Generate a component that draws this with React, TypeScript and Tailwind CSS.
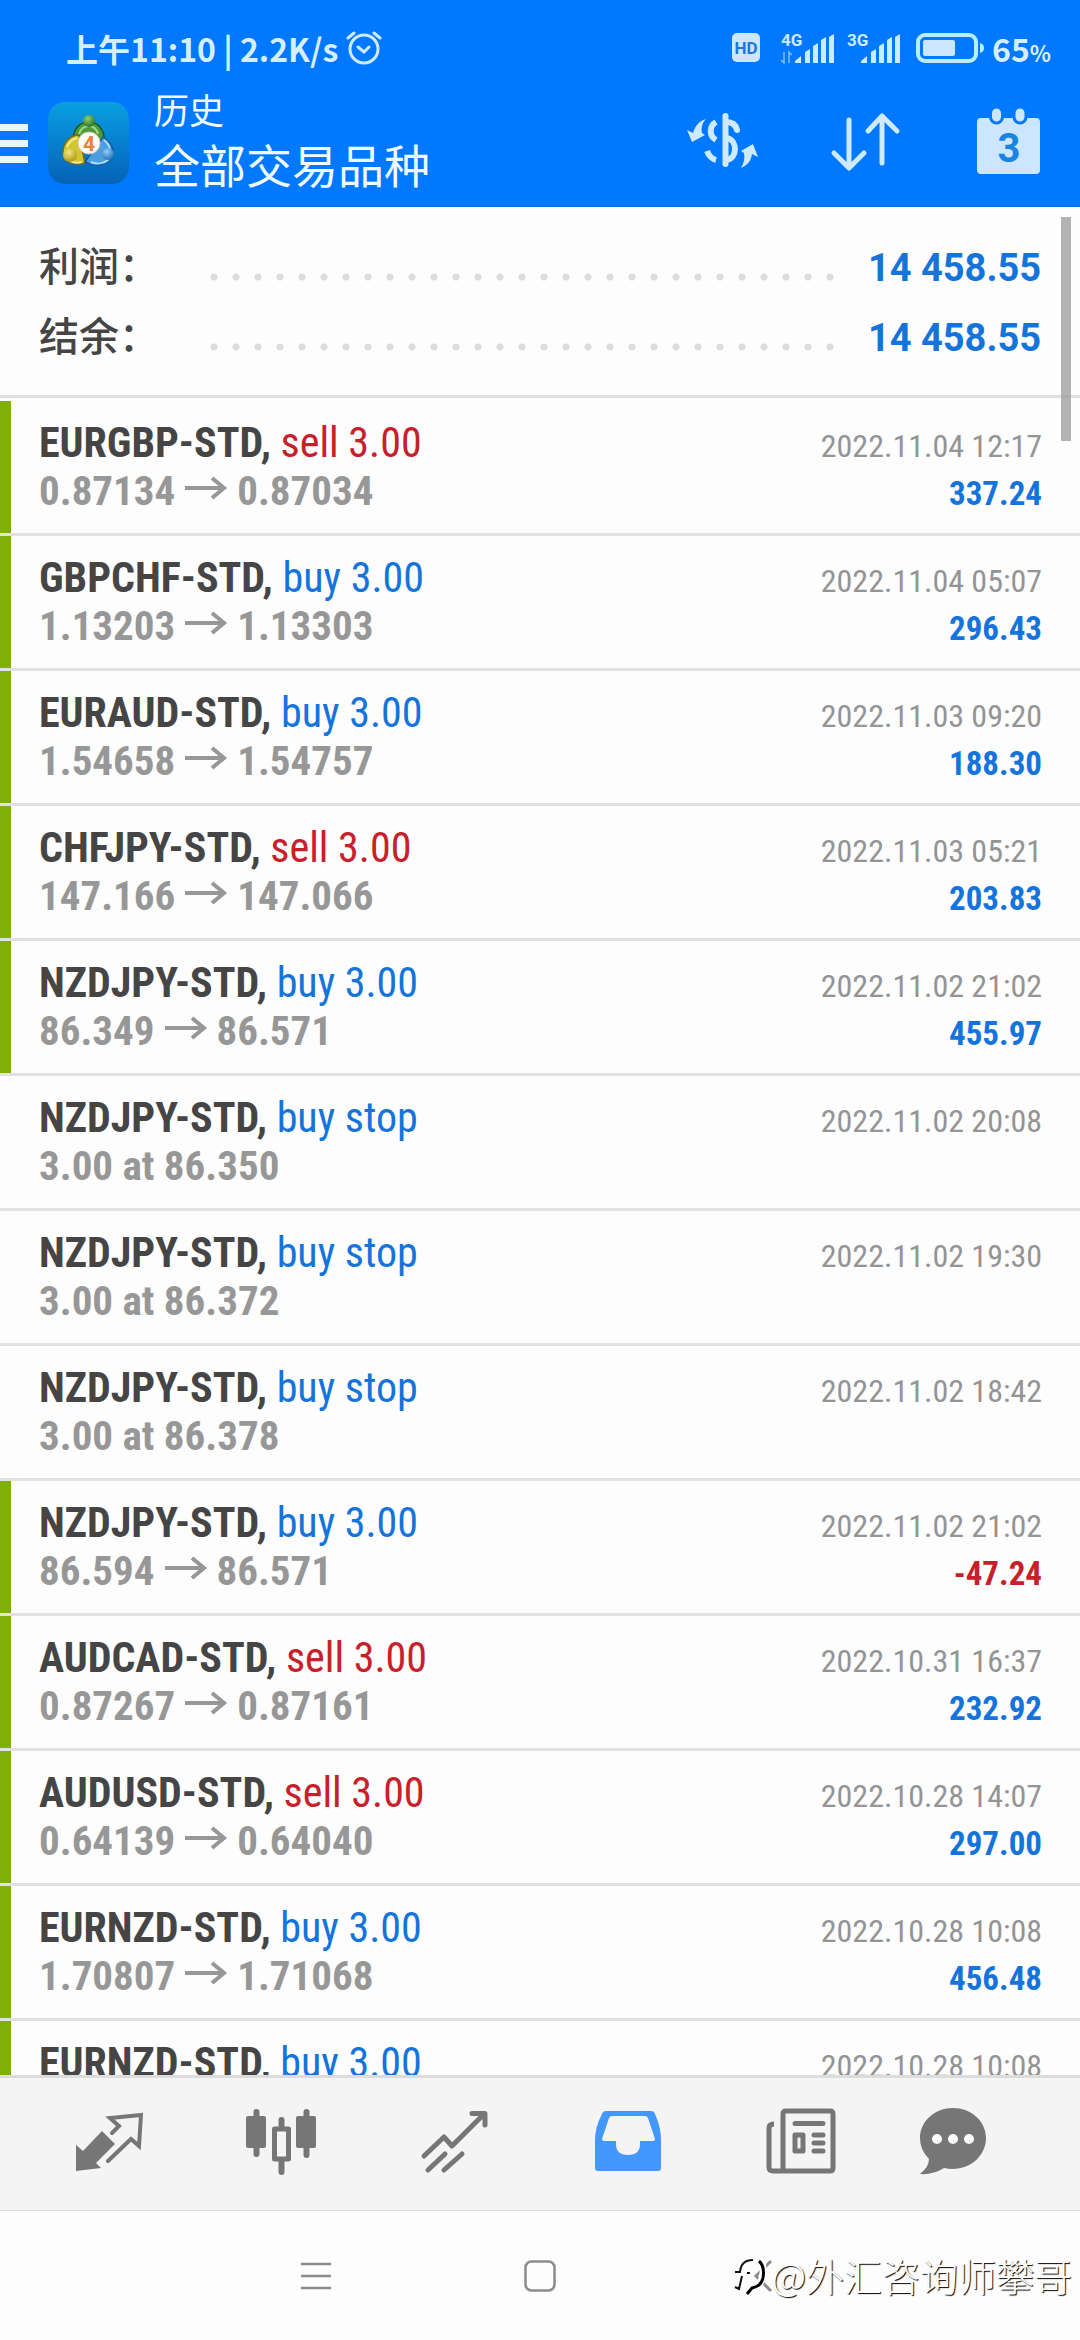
import type { ReactNode } from "react";

type Deal = {
  symbol: string;
  side: "buy" | "sell";
  label: string;
  time: string;
  from?: string;
  to?: string;
  order?: string;
  profit?: string;
};

const deals: Deal[] = [
  { symbol: "EURGBP-STD", side: "sell", label: "sell 3.00", from: "0.87134", to: "0.87034", time: "2022.11.04 12:17", profit: "337.24" },
  { symbol: "GBPCHF-STD", side: "buy", label: "buy 3.00", from: "1.13203", to: "1.13303", time: "2022.11.04 05:07", profit: "296.43" },
  { symbol: "EURAUD-STD", side: "buy", label: "buy 3.00", from: "1.54658", to: "1.54757", time: "2022.11.03 09:20", profit: "188.30" },
  { symbol: "CHFJPY-STD", side: "sell", label: "sell 3.00", from: "147.166", to: "147.066", time: "2022.11.03 05:21", profit: "203.83" },
  { symbol: "NZDJPY-STD", side: "buy", label: "buy 3.00", from: "86.349", to: "86.571", time: "2022.11.02 21:02", profit: "455.97" },
  { symbol: "NZDJPY-STD", side: "buy", label: "buy stop", order: "3.00 at 86.350", time: "2022.11.02 20:08" },
  { symbol: "NZDJPY-STD", side: "buy", label: "buy stop", order: "3.00 at 86.372", time: "2022.11.02 19:30" },
  { symbol: "NZDJPY-STD", side: "buy", label: "buy stop", order: "3.00 at 86.378", time: "2022.11.02 18:42" },
  { symbol: "NZDJPY-STD", side: "buy", label: "buy 3.00", from: "86.594", to: "86.571", time: "2022.11.02 21:02", profit: "-47.24" },
  { symbol: "AUDCAD-STD", side: "sell", label: "sell 3.00", from: "0.87267", to: "0.87161", time: "2022.10.31 16:37", profit: "232.92" },
  { symbol: "AUDUSD-STD", side: "sell", label: "sell 3.00", from: "0.64139", to: "0.64040", time: "2022.10.28 14:07", profit: "297.00" },
  { symbol: "EURNZD-STD", side: "buy", label: "buy 3.00", from: "1.70807", to: "1.71068", time: "2022.10.28 10:08", profit: "456.48" },
  { symbol: "EURNZD-STD", side: "buy", label: "buy 3.00", from: "1.70807", to: "1.71068", time: "2022.10.28 10:08", profit: "456.48" },
];

const totals = [
  { label: "利润：", value: "14 458.55" },
  { label: "结余：", value: "14 458.55" },
];

function Signal({ network, data }: { network: string; data?: boolean }) {
  return (
    <svg width="54" height="38" viewBox="0 -4 54 38" fill="#cdeaff" className="overflow-visible">
      <text x="0" y="13" fontSize="17" fontWeight="700" fontFamily="Roboto, sans-serif">
        {network}
      </text>
      {data && (
        <path d="M3 19v11l-3-3M8 30V19l3 3" fill="none" stroke="#7fbdff" strokeWidth="1.5" />
      )}
      <path d="M14 30v-2l6-5v7zM24 30V19l5-3v14zM32 30V13l5-3v20zM40 30V7l5-3v26zM48 30V4l5-3v29z" />
    </svg>
  );
}

function StatusBar() {
  return (
    <div className="flex h-[87px] items-center justify-between pt-[9px] pr-[29px] pl-[66px] font-['Noto_Sans_CJK_SC',sans-serif] text-[#d5efff]">
      <div className="flex items-center gap-2 text-[32px] font-bold">
        <span>上午11:10 | 2.2K/s</span>
        <svg width="36" height="36" viewBox="0 0 36 36" fill="none" stroke="#cdeaff" strokeWidth="3" strokeLinecap="round">
          <circle cx="18" cy="19" r="14" />
          <path d="M12 17l6 5 5-5M2 8l6-5M34 8l-6-5" />
        </svg>
      </div>
      <div className="flex items-center">
        <svg width="28" height="30" viewBox="0 0 28 30" className="mr-[21px]">
          <rect width="28" height="29" rx="5" fill="#cde6ff" />
          <text x="14" y="21" textAnchor="middle" fontSize="17" fontWeight="700" fill="#1a78de" fontFamily="Roboto, sans-serif">
            HD
          </text>
        </svg>
        <Signal network="4G" data />
        <span className="w-3" />
        <Signal network="3G" />
        <svg width="68" height="30" viewBox="0 0 68 30" className="ml-[15px]">
          <rect x="2" y="2" width="58" height="26" rx="7" fill="none" stroke="#b9ecff" strokeWidth="4" />
          <rect x="7" y="7" width="32" height="16" rx="2" fill="#cde6ff" />
          <path d="M64 10q4 1 4 5t-4 5z" fill="#b9ecff" />
        </svg>
        <span className="ml-2 text-[32px] font-bold">
          65<span className="text-[22px]">%</span>
        </span>
      </div>
    </div>
  );
}

function Logo() {
  return (
    <svg width="81" height="82" viewBox="0 0 81 82">
      <defs>
        <linearGradient id="tile" x1="0" y1="0" x2="0" y2="1">
          <stop offset="0" stopColor="#0a9fe0" />
          <stop offset="0.5" stopColor="#0880cf" />
          <stop offset="1" stopColor="#0562b4" />
        </linearGradient>
        <radialGradient id="green" cx="0.4" cy="0.3" r="0.8">
          <stop offset="0" stopColor="#8fd06c" />
          <stop offset="1" stopColor="#1b6a2a" />
        </radialGradient>
        <radialGradient id="yellow" cx="0.4" cy="0.3" r="0.8">
          <stop offset="0" stopColor="#f3ea7a" />
          <stop offset="1" stopColor="#a88f10" />
        </radialGradient>
        <radialGradient id="blue" cx="0.4" cy="0.3" r="0.8">
          <stop offset="0" stopColor="#8fd0fa" />
          <stop offset="1" stopColor="#1a66b4" />
        </radialGradient>
      </defs>
      <rect width="81" height="82" rx="17" fill="url(#tile)" />
      <path d="M25 43C24 27 31 20 41 20s17 9 15 24z" fill="#4c9b3a" stroke="#165a2a" strokeWidth="1.5" />
      <path d="M31 32c2-6 6-8 10-8s8 3 9 8" fill="none" stroke="#a4d884" strokeWidth="2" />
      <path d="M37 61C25 64 15 60 15 50c0-9 7-17 16-17z" fill="#d3c52f" stroke="#7a6c12" strokeWidth="1.5" />
      <path d="M19 45c2-5 5-8 10-9M22 59c4 2 8 2 12 1" fill="none" stroke="#f4ee96" strokeWidth="2" />
      <path d="M37 60c10 6 28 3 28-9 0-8-4-12-10-16z" fill="#4b9fe0" stroke="#155a9c" strokeWidth="1.5" />
      <path d="M43 60c7 3 14 1 18-3M56 38c4 3 6 7 6 11" fill="none" stroke="#a8dafc" strokeWidth="2" />
      <circle cx="41" cy="19" r="6" fill="url(#green)" />
      <circle cx="22" cy="53" r="7" fill="url(#yellow)" />
      <circle cx="60" cy="52" r="6" fill="url(#blue)" />
      <circle cx="41" cy="41" r="11" fill="#fffaf5" stroke="#d9c9b8" strokeWidth="1" />
      <text x="41" y="49" textAnchor="middle" fontSize="21" fontWeight="700" fill="#e8823a" fontFamily="Roboto, sans-serif">
        4
      </text>
    </svg>
  );
}

function HeaderButton({ label, children }: { label: string; children: ReactNode }) {
  return (
    <button type="button" aria-label={label} className="flex w-[143px] justify-center">
      <svg width="72" height="72" viewBox="0 2 72 72" fill="none" stroke="#cdeaff" strokeLinecap="round" strokeLinejoin="round">
        {children}
      </svg>
    </button>
  );
}

function AppBar() {
  return (
    <div className="flex h-[112px] items-center">
      <button type="button" aria-label="菜单" className="flex w-7 flex-col gap-[9px]">
        <span className="h-[7px] bg-[#e6f6ff]" />
        <span className="h-[7px] bg-[#e6f6ff]" />
        <span className="h-[7px] bg-[#e6f6ff]" />
      </button>
      <div className="ml-5">
        <Logo />
      </div>
      <div className="ml-[25px] flex-1 pb-2 font-['Noto_Sans_CJK_SC',sans-serif] text-[#f0fbff]">
        <p className="text-[35px] leading-[48px]">历史</p>
        <h1 className="text-[46px] leading-[60px]">全部交易品种</h1>
      </div>
      <div className="flex">
        <HeaderButton label="品种">
          <path d="M38.5 11v48" strokeWidth="6" />
          <path d="M29 17c-7 4-7 14 0 18M20 46c2 5 5 8 9 9" strokeWidth="6" strokeLinecap="butt" />
          <path d="M39 17c6 0 10 3 11 8M39 33c12 1 12 21 0 22" strokeWidth="6" />
          <path d="M0 25l6 3c2-7 6-12 13-14-4 4-5 9-4 14l3 2L5 37zM71 52l-6-3c-1 7-4 11-11 14 3-5 4-10 3-15l-3-2 12-7z" fill="#cdeaff" stroke="none" />
        </HeaderButton>
        <HeaderButton label="排序">
          <path d="M19 15v47M4 48l15 15 15-15M52 58V11M38 26l14-15 15 15" strokeWidth="5" />
        </HeaderButton>
        <HeaderButton label="日期">
          <rect x="4" y="13" width="63" height="56" rx="4" fill="#cde6ff" stroke="none" />
          <path d="M23.5 7v5M47 7v5" stroke="#0078ff" strokeWidth="15" />
          <path d="M23.5 8v4M47 8v4" stroke="#cde6ff" strokeWidth="9" />
          <text x="36" y="57" textAnchor="middle" fontSize="40" fontWeight="700" fill="#1a84e0" stroke="none" fontFamily="Roboto, sans-serif">
            3
          </text>
        </HeaderButton>
      </div>
    </div>
  );
}

function Totals() {
  return (
    <dl className="border-b-[3px] border-[#e1e1e1] px-[39px] pt-[22px] pb-[26px]">
      {totals.map((t) => (
        <div key={t.label} className="flex h-[70px] items-baseline leading-[70px]">
          <dt className="w-[164px] font-['Noto_Sans_CJK_SC',sans-serif] text-[40px] font-medium text-[#454545]">
            {t.label}
          </dt>
          <dd className="flex flex-1 items-baseline">
            <span className="mb-[2px] h-[8px] flex-1 bg-[radial-gradient(circle,#dcdcdc_3px,transparent_4px)] bg-[length:22px_8px] bg-repeat-x" />
            <span className="ml-7 font-['Roboto',sans-serif] text-[38px] font-bold text-[#1474dc]">{t.value}</span>
          </dd>
        </div>
      ))}
    </dl>
  );
}

function DealRow({ deal }: { deal: Deal }) {
  return (
    <li className="flex border-b-[3px] border-[#e1e1e1]">
      <span className={deal.profit ? "w-[11px] bg-[#7fb00a]" : "w-[11px]"} />
      <div className="flex-1 py-[18px] pr-[38px] pl-7 leading-[48px]">
        <div className="flex h-12 items-baseline justify-between">
          <p className="text-[42px]">
            <span className="font-bold text-[#454545]">{deal.symbol},</span>{" "}
            <span className={deal.side === "buy" ? "text-[#1474dc]" : "text-[#c8202a]"}>{deal.label}</span>
          </p>
          <time className="text-[32px] text-[#949494]">{deal.time}</time>
        </div>
        <div className="flex h-12 items-baseline justify-between font-bold">
          <p className="flex items-baseline text-[41px] text-[#979797]">
            {deal.order ?? (
              <>
                {deal.from}
                <svg width="44" height="30" viewBox="0 0 44 30" fill="none" stroke="#979797" strokeWidth="4" className="mx-[9px]">
                  <path d="M1 13h39M28 3l12 10-12 10" />
                </svg>
                {deal.to}
              </>
            )}
          </p>
          {deal.profit && (
            <span className={deal.profit.startsWith("-") ? "text-[33px] text-[#c8202a]" : "text-[33px] text-[#1474dc]"}>
              {deal.profit}
            </span>
          )}
        </div>
      </div>
    </li>
  );
}

function TabButton({ label, children }: { label: string; children: ReactNode }) {
  return (
    <button type="button" aria-label={label} className="flex items-center justify-center">
      <svg width="72" height="72" viewBox="0 0 72 72" fill="none" stroke="#767676" strokeLinecap="round" strokeLinejoin="round">
        {children}
      </svg>
    </button>
  );
}

function TabBar() {
  return (
    <nav className="grid h-[136px] grid-cols-[173fr_173fr_173fr_173fr_173fr_131fr] border-t-[3px] border-b border-t-[#dcdcdc] border-b-[#dcdcdc] bg-[#f4f4f4] pr-[61px] pl-[22px]">
      <TabButton label="行情">
        <path d="M3 37v26l25-3-5-5 19-19-13-13-19 20z" fill="#767676" stroke="none" />
        <path d="M35 53l23-22 8 7 2-31-31 3 9 8-7 7" strokeWidth="4" strokeLinejoin="miter" />
      </TabButton>
      <TabButton label="图表">
        <path d="M10.5 4v42M35.5 12v8M35.5 53v11M60.5 4v43" strokeWidth="6" />
        <rect x="0" y="8" width="20" height="32" rx="2" fill="#767676" stroke="none" />
        <rect x="28.5" y="21" width="14" height="30" strokeWidth="5" />
        <rect x="50" y="8" width="20" height="32" rx="2" fill="#767676" stroke="none" />
      </TabButton>
      <TabButton label="交易">
        <path d="M5 48l20-19 8 9L65 6M53 5.5h13V17M26 46L9 62M43 46L25 62" strokeWidth="5" />
      </TabButton>
      <TabButton label="历史">
        <path
          d="M14 3h45q3 0 4 3 6 13 6 26v28q0 3-3 3H6q-3 0-3-3V32Q3 19 10 6q1-3 4-3z"
          fill="#4398ff"
          stroke="none"
        />
        <path d="M20 8h33q2 0 3 2l7 21q0 2-2 2H48v3q0 11-12 11T24 36v-3H12q-2 0-2-2l7-21q1-2 3-2z" fill="#f4f4f4" stroke="none" />
      </TabButton>
      <TabButton label="新闻">
        <path d="M18 63V6q0-3 3-3h44q3 0 3 3v54q0 3-3 3H8q-4 0-4-4V20q0-4 5-4" strokeWidth="5" strokeLinecap="butt" />
        <path d="M30 15.500h28M49 27h9M49 35h9M49 43h9" strokeWidth="5" />
        <rect x="30" y="27" width="8" height="16" strokeWidth="5" />
      </TabButton>
      <TabButton label="消息">
        <path
          d="M36 0c18 0 33 13 33 30S54 61 36 61q-5 0-9-1-11 7-24 6 9-7 9-15Q3 42 3 30C3 13 18 0 36 0z"
          fill="#767676"
          stroke="none"
        />
        <path d="M20 31h.01M36 31h.01M52 31h.01" stroke="#fafafa" strokeWidth="10" />
      </TabButton>
    </nav>
  );
}

function SystemNav() {
  return (
    <footer className="relative flex h-[129px] items-center justify-center gap-[192px] bg-[#fdfdfd]">
      <button type="button" aria-label="最近任务">
        <svg width="32" height="32" viewBox="0 0 32 32" stroke="#8c8c8c" strokeWidth="2.5">
          <path d="M1 4h30M1 16h30M1 28h30" />
        </svg>
      </button>
      <button type="button" aria-label="主屏幕">
        <svg width="32" height="32" viewBox="0 0 32 32" fill="none" stroke="#8c8c8c" strokeWidth="2.5">
          <rect x="1.5" y="1.5" width="29" height="29" rx="6" />
        </svg>
      </button>
      <button type="button" aria-label="返回">
        <svg width="32" height="32" viewBox="0 0 32 32" fill="none" stroke="#8c8c8c" strokeWidth="3">
          <path d="M23 1L8 16l15 15" />
        </svg>
      </button>
      <div className="absolute right-2 bottom-[38px] flex items-center gap-[2px] text-white">
        <svg width="36" height="42" viewBox="0 0 36 42" fill="none">
          <path d="M5 17h4q2-11 14-11 8 0 7 13-1 13-12 18" stroke="#fff" strokeWidth="7" />
          <path d="M2 18h5q1-12 13-12M2 33l4 2 3-13M14 19h3" stroke="#111" strokeWidth="2" />
          <path d="M26 7q6 5 4 17-2 8-11 10l-5 6" stroke="#000" strokeWidth="3" />
        </svg>
        <span className="font-['Noto_Sans_CJK_SC',sans-serif] text-[38px] leading-[54px] font-light [text-shadow:1px_1px_1px_#000]">
          @外汇咨询师攀哥
        </span>
      </div>
    </footer>
  );
}

export default function App() {
  return (
    <div className="flex h-screen flex-col bg-[#fdfdfd] font-['Roboto_Condensed',sans-serif]">
      <header className="border-b-2 border-[#0f6fe0] bg-[#0078ff] pb-[6px]">
        <StatusBar />
        <AppBar />
      </header>
      <main className="relative min-h-0 flex-1 overflow-hidden">
        <Totals />
        <ul className="pt-[3px]">
          {deals.map((deal, i) => (
            <DealRow key={i} deal={deal} />
          ))}
        </ul>
        <div className="absolute top-[10px] right-[9px] h-[224px] w-[10px] bg-[#a0a0a0]/80" />
      </main>
      <TabBar />
      <SystemNav />
    </div>
  );
}
